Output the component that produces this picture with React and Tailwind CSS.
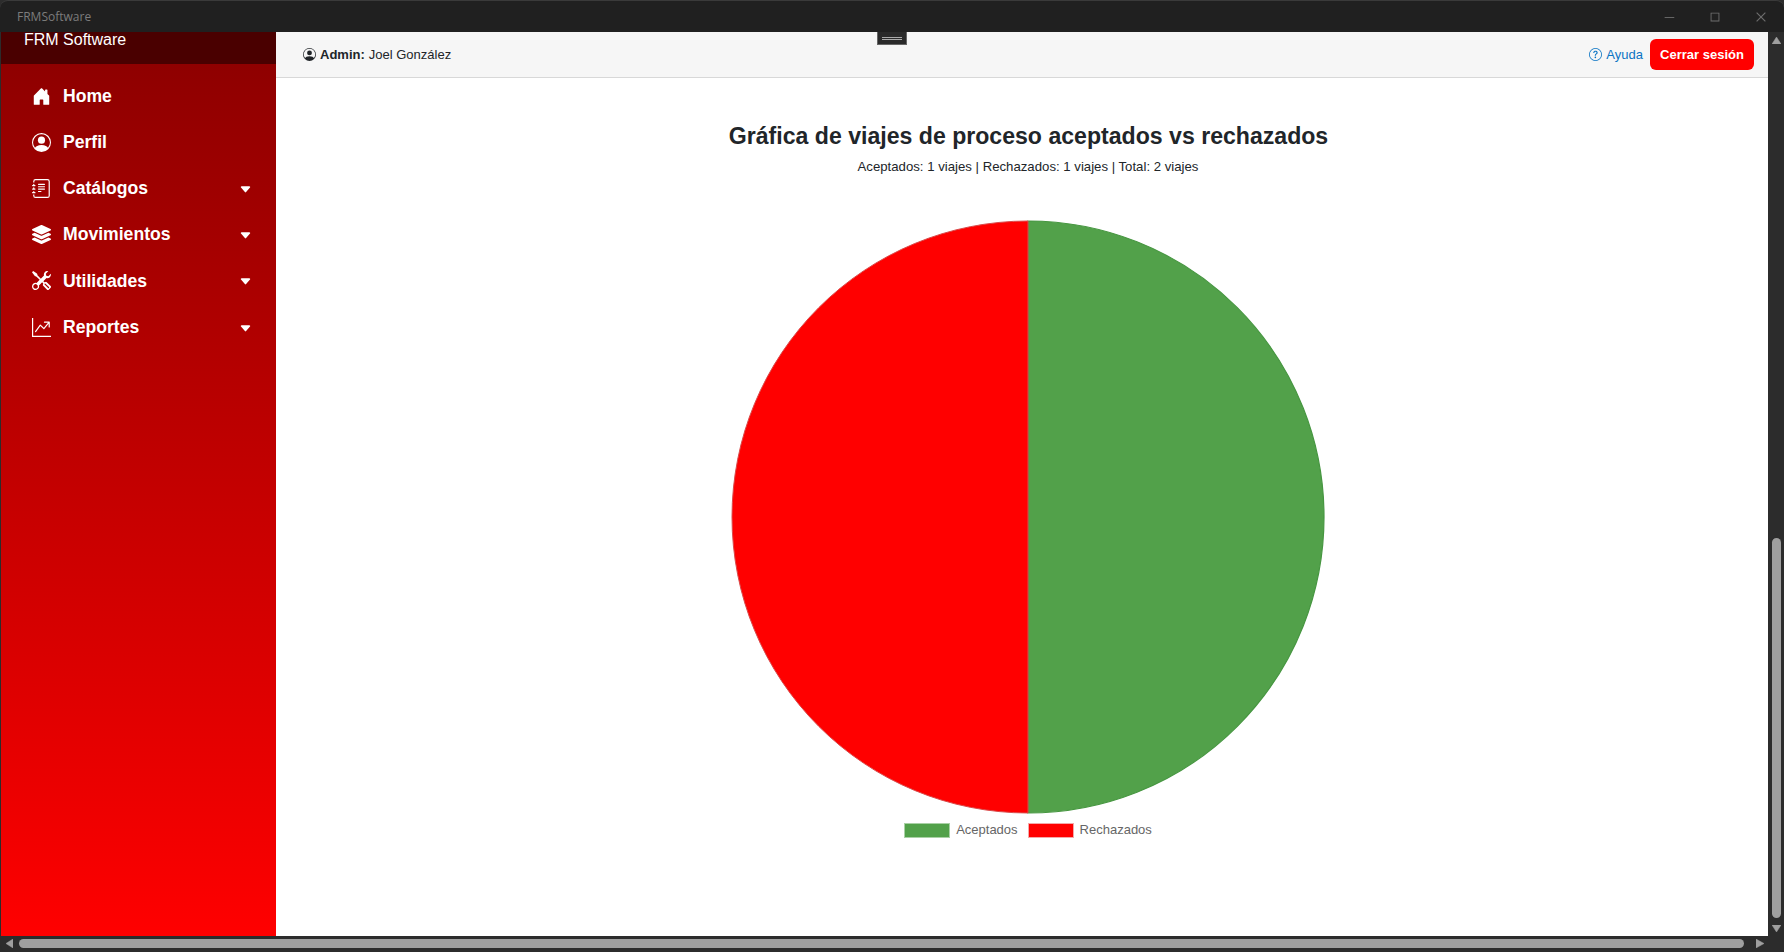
import React from "react";
import { BsHouseDoorFill, BsPersonCircle, BsJournalText, BsTools, BsGraphUpArrow, BsQuestionCircle, BsCaretDownFill } from "react-icons/bs";
import { FaLayerGroup } from "react-icons/fa";
import { VscChromeMinimize, VscChromeMaximize, VscChromeClose } from "react-icons/vsc";

const items = [
  { label: "Home", Icon: BsHouseDoorFill },
  { label: "Perfil", Icon: BsPersonCircle },
  { label: "Catálogos", Icon: BsJournalText, caret: true },
  { label: "Movimientos", Icon: FaLayerGroup, caret: true },
  { label: "Utilidades", Icon: BsTools, caret: true },
  { label: "Reportes", Icon: BsGraphUpArrow, caret: true },
];

function Arrow({ dir }) {
  const pts = { up: "0,7 4.5,0 9,7", down: "0,0 9,0 4.5,7", left: "7,0 7,9 0,4.5", right: "0,0 0,9 8,4.5" }[dir];
  const vertical = dir === "up" || dir === "down";
  const w = vertical ? 9 : dir === "right" ? 8 : 7;
  const h = vertical ? 7 : 9;
  return (
    <svg width={w} height={h} viewBox={`0 0 ${w} ${h}`} className="shrink-0 block">
      <polygon points={pts} fill="#9f9f9f" stroke="#9f9f9f" strokeWidth="0.5" strokeLinejoin="round" />
    </svg>
  );
}

export default function App() {
  return (
    <div className="w-[1784px] h-[952px] overflow-hidden bg-[#2c2c2c] flex flex-col font-['Liberation_Sans',Arial,sans-serif]">
      <div className="h-[32px] shrink-0 bg-[#202020] flex items-center justify-between border-t border-[#3a3a3a] rounded-t-lg">
        <span className="pl-[17px] text-[12px] text-[#7c7c7c] font-['Open_Sans',sans-serif]">FRMSoftware</span>
        <div className="flex items-center text-[#6f6f6f]">
          <div className="w-[46px] flex justify-center"><VscChromeMinimize size={14} /></div>
          <div className="w-[46px] flex justify-center"><VscChromeMaximize size={14} /></div>
          <div className="w-[46px] flex justify-center"><VscChromeClose size={14} /></div>
        </div>
      </div>

      <div className="flex flex-1 min-h-0">
        <div className="flex flex-col flex-1 min-w-0">
          <div className="flex flex-1 min-h-0 pl-px">
            <aside className="w-[275px] shrink-0 bg-gradient-to-b from-[#8b0000] to-[#ff0000] flex flex-col">
              <div className="h-[32px] bg-[#4a0000] text-white text-[16px] leading-[16px] pl-[23px]">FRM Software</div>
              <nav className="pt-[9px] flex flex-col">
                {items.map(({ label, Icon, caret }) => (
                  <div key={label} className="h-[46.2px] flex items-center pl-[31px] pr-[24.5px] text-white">
                    <Icon size={19} className="shrink-0" />
                    <span className="ml-[12px] text-[17.6px] font-bold">{label}</span>
                    {caret && <BsCaretDownFill size={13} className="ml-auto mt-[2px]" />}
                  </div>
                ))}
              </nav>
            </aside>

            <main className="flex-1 min-w-0 bg-white flex flex-col relative">
              <header className="h-[46px] shrink-0 bg-[#f6f6f6] border-b border-[#d8d8d8] flex items-center pl-[27px] pr-[14px] text-[13px] text-[#212529]">
                <BsPersonCircle size={13} className="mr-[4px]" />
                <span className="font-bold mr-[4px]">Admin:</span>
                <span>Joel González</span>
                <a className="ml-auto flex items-center text-[13px] text-[#0a74c4]">
                  <BsQuestionCircle size={13} className="mr-[4px]" />Ayuda
                </a>
                <button className="ml-[7px] h-[31px] w-[104px] rounded-[6px] bg-[#ff0000] text-white text-[13px] font-bold">Cerrar sesión</button>
              </header>
              <div className="absolute left-1/2 top-0 -translate-x-1/2 ml-[-130px] w-[30px] h-[13px] bg-[#2a2a2a] border border-[#666] border-t-0 flex items-center justify-center">
                <div className="w-[20px] h-[3px] border-y border-[#aaa]" />
              </div>

              <div className="flex-1 flex flex-col items-center pl-[12px]">
                <h1 className="mt-[44px] pl-[1px] text-[23.1px] leading-[29px] font-bold text-[#212529]">Gráfica de viajes de proceso aceptados vs rechazados</h1>
                <p className="mt-[7px] text-[13.2px] leading-[18px] text-[#212529]">Aceptados: 1 viajes | Rechazados: 1 viajes | Total: 2 viajes</p>
                <svg width="594" height="594" viewBox="0 0 594 594" className="mt-[44px] block">
                  <path d="M297 1 A296 296 0 0 1 297 593 Z" fill="#52a14a" stroke="#469640" strokeWidth="1.2" />
                  <path d="M297 1 A296 296 0 0 0 297 593 Z" fill="#ff0000" stroke="#d94a4a" strokeWidth="1" />
                </svg>
                <div className="mt-[9px] flex items-center text-[13px] leading-[15px] text-[#666]">
                  <span className="w-[46px] h-[15px] bg-[#52a14a] border border-[#a9d1a5] mr-[6px]" />
                  <span className="-mt-[2px]">Aceptados</span>
                  <span className="ml-[10px] w-[46px] h-[15px] bg-[#ff0000] border border-[#f4a9a9] mr-[6px]" />
                  <span className="-mt-[2px]">Rechazados</span>
                </div>
              </div>
            </main>
          </div>

          <div className="h-[16px] shrink-0 flex items-center pl-[6px] pr-[4px] pb-px bg-[#2c2c2c] rounded-bl-lg">
            <Arrow dir="left" />
            <div className="ml-[6px] mr-[12px] flex-1 h-[9px] rounded-full bg-[#9f9f9f]" />
            <Arrow dir="right" />
          </div>
        </div>

        <div className="w-[16px] shrink-0 bg-[#2c2c2c] flex flex-col items-center pt-[5px] pb-[20px] pl-px">
          <Arrow dir="up" />
          <div className="mt-auto w-[9px] h-[380px] rounded-full bg-[#9f9f9f]" />
          <div className="mt-[7px]"><Arrow dir="down" /></div>
        </div>
      </div>
    </div>
  );
}
